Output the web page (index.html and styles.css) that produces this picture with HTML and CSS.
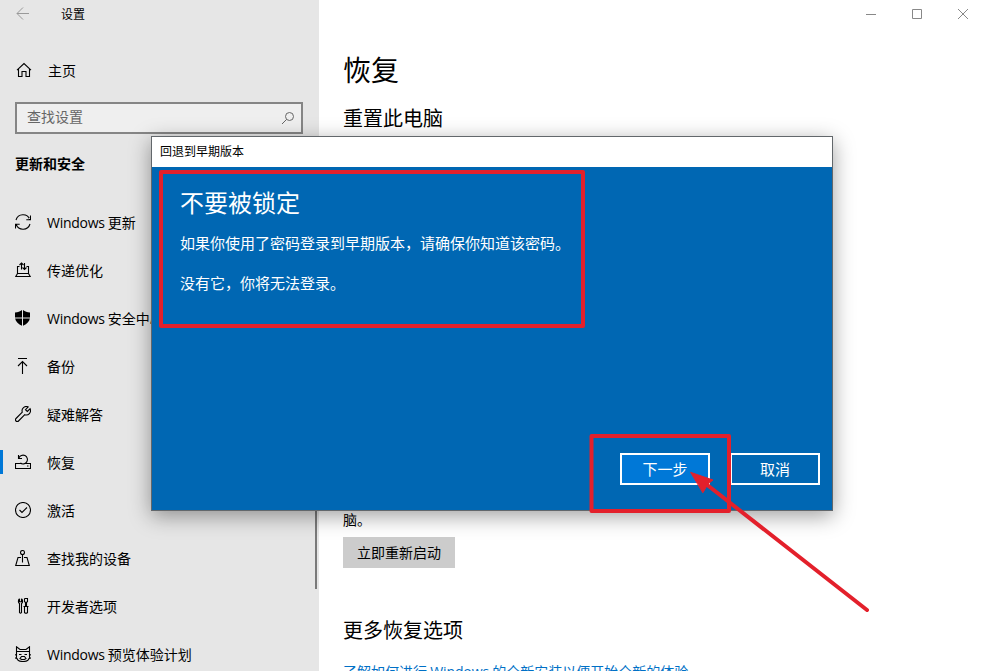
FILE: index.html
```
<!DOCTYPE html>
<html lang="zh-CN">
<head>
    <meta charset="UTF-8">
    <meta name="viewport" content="width=device-width, initial-scale=1.0">
    <title>设置</title>
    <link rel="stylesheet" href="styles.css">
</head>
<body>
    <div class="window">
        <div class="sidebar">
            <div class="title-bar">
                <svg class="back" width="14" height="14" viewBox="0 0 14 14"><path d="M13 7.500H1M7 1.500l-6 6 6 6"/></svg>
                <span>设置</span>
            </div>
            <div class="home">
                <svg class="icon" width="16" height="16" viewBox="0 0 16 16"><path d="M1 8.200L8 1.500l7 6.700M2.500 7v7.500h3.500V9.500h4v5h3.500V7"/></svg>
                <span>主页</span>
            </div>
            <div class="search-box">
                <span>查找设置</span>
                <svg width="14" height="14" viewBox="0 0 14 14"><circle cx="8.500" cy="5.500" r="4"/><path d="M5.600 8.400L1 13"/></svg>
            </div>
            <div class="category">更新和安全</div>
            <div class="nav">
                <div class="nav-item">
                    <svg class="icon" width="16" height="16" viewBox="0 0 16 16"><path d="M1 6A7.300 7.300 0 0 1 14.800 5.500M15.500 1.500v4.200h-4.200M15 10A7.300 7.300 0 0 1 1.200 10.500M.5 14.500v-4.200h4.200"/></svg>
                    <span><span class="latin">Windows</span> 更新</span>
                </div>
                <div class="nav-item">
                    <svg class="icon" width="16" height="16" viewBox="0 0 16 16"><path d="M4.500 4.500h-2v7h11v-7h-2M2.500 11.500L.8 14.500h14.400l-1.700-3M6.500 7.500V1M4.500 3l2-2 2 2M9.500 1v6.500M7.500 5.500l2 2 2-2"/></svg>
                    <span>传递优化</span>
                </div>
                <div class="nav-item">
                    <svg class="icon shield" width="16" height="16" viewBox="0 0 16 16"><path d="M7 0v7.500H0V2.500C3 2.500 5 1.500 7 0zM8 0v7.500h7V2.500C12 2.500 10 1.500 8 0zM.1 8.500H7v7.300C3.500 14 .7 12 .1 8.500zM8 8.500h6.900c-.6 3.500-3.400 5.500-6.900 7.300z"/></svg>
                    <span><span class="latin">Windows</span> 安全中心</span>
                </div>
                <div class="nav-item">
                    <svg class="icon" width="16" height="16" viewBox="0 0 16 16"><path d="M3 .5h9M7.500 16V3.500M3 8l4.500-4.500L12 8"/></svg>
                    <span>备份</span>
                </div>
                <div class="nav-item">
                    <svg class="icon" width="16" height="16" viewBox="0 0 16 16"><path d="M13.200.9A4.300 4.300 0 0 0 7.300 6.200L1 12.500a1.600 1.600 0 0 0 2.500 2.500L9.800 8.700A4.300 4.300 0 0 0 15.100 2.800L12.300 5.500 10.500 3.700z"/></svg>
                    <span>疑难解答</span>
                </div>
                <div class="nav-item active">
                    <svg class="icon" width="16" height="16" viewBox="0 0 16 16"><path d="M5.500 9.500h-5v5h15v-5h-5M3.500 1v3.500H7M3.900 4A4.400 4.400 0 1 1 5.300 9M12 12h1.500"/></svg>
                    <span>恢复</span>
                </div>
                <div class="nav-item">
                    <svg class="icon" width="16" height="16" viewBox="0 0 16 16"><circle cx="8" cy="8" r="7.500"/><path d="M4.500 8l2.500 2.500L12 5.500"/></svg>
                    <span>激活</span>
                </div>
                <div class="nav-item">
                    <svg class="icon" width="16" height="16" viewBox="0 0 16 16"><circle cx="7.500" cy="2.500" r="2"/><path d="M7.500 4.500v8M6 7.500H3L.7 15.500h13.600L12 7.500H9"/></svg>
                    <span>查找我的设备</span>
                </div>
                <div class="nav-item">
                    <svg class="icon" width="16" height="16" viewBox="0 0 16 16"><path d="M4.500.8v3h2v-3M4.500.8C3 1.800 3 4.500 4.500 5.500v9q1 1.300 2 0v-9C8 4.500 8 1.800 6.500.8M9.500.5h3V3.500l-1 1v4M9.500.5V3.500l1 1v4M8.500 8.500h5M9.500 8.500v6q1.500 1.500 3 0v-6"/></svg>
                    <span>开发者选项</span>
                </div>
                <div class="nav-item">
                    <svg class="icon" width="16" height="16" viewBox="0 0 16 16"><path d="M1.500 9.500V.8L5 3.500h6L14.500.8v8.700M1.500 5.500h13M.3 8.500l1.200 1v2l-1 .5 1.500.5c1 4 11 4 12 0l1.500-.5-1-.5v-2l1.200-1M4 8.500h2.500M9.500 8.500H12M5 12.500l1.500-2h3l1.500 2-1.500 1h-3z"/></svg>
                    <span><span class="latin">Windows</span> 预览体验计划</span>
                </div>
            </div>
            <div class="scrollbar"></div>
        </div>
        <div class="content">
            <div class="window-buttons">
                <svg width="10" height="10" viewBox="0 0 10 10"><path d="M0 5.500h10"/></svg>
                <svg width="10" height="10" viewBox="0 0 10 10"><path d="M.5.5h9v9h-9z"/></svg>
                <svg width="10" height="10" viewBox="0 0 10 10"><path d="M0 0l10 10M10 0L0 10"/></svg>
            </div>
            <h1>恢复</h1>
            <h2>重置此电脑</h2>
            <div class="startup">
                <p>脑。</p>
                <button type="button" class="restart-button">立即重新启动</button>
            </div>
            <h2>更多恢复选项</h2>
            <a class="link" href="#">了解如何进行 <span class="latin">Windows</span> 的全新安装以便开始全新的体验</a>
        </div>
    </div>

    <div class="dialog">
        <div class="dialog-title">回退到早期版本</div>
        <div class="dialog-body">
            <div class="message">
                <h3>不要被锁定</h3>
                <p>如果你使用了密码登录到早期版本，请确保你知道该密码。</p>
                <p>没有它，你将无法登录。</p>
            </div>
            <div class="dialog-buttons">
                <button type="button" class="dialog-button primary">下一步</button>
                <button type="button" class="dialog-button">取消</button>
            </div>
        </div>
    </div>

    <!-- red marks drawn over the dialog -->
    <svg class="marks" width="983" height="671" viewBox="0 0 983 671">
        <rect x="161" y="172" width="422" height="154"/>
        <rect x="591.500" y="436" width="137.500" height="75"/>
        <path d="M706 484L867 610"/>
        <polygon points="691,472.500 713,480 708,484 703,492.500"/>
    </svg>
</body>
</html>
```
FILE: styles.css
```
body {
    font-family: "Noto Sans CJK SC", sans-serif;
    font-size: 14px;
    margin: 0;
    color: #000;
    height: 671px;
    overflow: hidden;
    position: relative;
}
h1, h2, h3, p {
    margin: 0;
    font-weight: normal;
}
svg {
    fill: none;
    stroke: #000;
    stroke-width: 1;
    flex-shrink: 0;
}
.icon {
    stroke-width: 1.1;
}
.latin {
    font-family: "Open Sans", sans-serif;
    letter-spacing: -0.28px;
}
.window {
    display: flex;
    height: 671px;
}
.sidebar {
    width: 319px;
    flex-shrink: 0;
    background-color: #e6e6e6;
    position: relative;
}
.title-bar {
    display: flex;
    align-items: center;
    gap: 31px;
    height: 26px;
    padding-left: 16px;
    font-size: 12px;
}
.back {
    stroke: #999;
}
.home {
    display: flex;
    align-items: center;
    gap: 16px;
    height: 48px;
    margin-top: 20px;
    padding-left: 16px;
}
.search-box {
    display: flex;
    align-items: center;
    justify-content: space-between;
    box-sizing: border-box;
    width: 288px;
    height: 32px;
    margin: 8px 0 0 15px;
    padding: 0 6px 4px 10px;
    border: 2px solid #858585;
    background-color: #efefef;
    color: #666;
}
.search-box svg {
    stroke: #666;
    margin-top: 3px;
}
.category {
    height: 24px;
    line-height: 24px;
    margin-top: 17px;
    padding-left: 15px;
    font-weight: bold;
}
.nav {
    margin-top: 23px;
}
.nav-item {
    display: flex;
    align-items: center;
    gap: 16px;
    height: 48px;
    padding-left: 15px;
    white-space: nowrap;
}
.shield {
    fill: #000;
    stroke: none;
}
.active {
    padding-left: 12px;
    background: linear-gradient(#0078d7, #0078d7) no-repeat 0 12px / 3px 24px;
    border-left: 3px solid transparent;
    background-origin: border-box;
}
.scrollbar {
    position: absolute;
    right: 2px;
    top: 160px;
    width: 2px;
    height: 429px;
    background-color: #7a7a7a;
}
.content {
    flex: 1;
    padding-left: 24px;
    background-color: #fff;
}
.window-buttons {
    display: flex;
    justify-content: flex-end;
    gap: 36px;
    height: 10px;
    padding: 9px 15px 0 0;
}
.window-buttons svg {
    stroke: #888;
}
h1 {
    margin-top: 30px;
    font-size: 28px;
    line-height: 40px;
}
h2 {
    margin-top: 15px;
    font-size: 20px;
    line-height: 28px;
}
.startup {
    margin-top: 377px;
}
.startup p {
    line-height: 20px;
}
.restart-button {
    display: block;
    width: 112px;
    height: 31px;
    margin: 8px 0 48px;
    padding: 0 0 2px;
    border: none;
    background-color: #ccc;
    color: #000;
    font: inherit;
}
.link {
    display: block;
    margin-top: 17px;
    line-height: 20px;
    color: #0070c6;
    text-decoration: none;
}
.link .latin {
    letter-spacing: -0.1px;
}
.dialog {
    position: absolute;
    left: 151px;
    top: 136px;
    box-sizing: border-box;
    width: 682px;
    height: 375px;
    display: flex;
    flex-direction: column;
    border: 1px solid #62676b;
    box-shadow: 0 5px 20px rgba(0, 0, 0, 0.38);
}
.dialog-title {
    height: 30px;
    line-height: 28px;
    padding-left: 8px;
    background-color: #fff;
    font-size: 12px;
}
.dialog-body {
    flex: 1;
    display: flex;
    flex-direction: column;
    justify-content: space-between;
    padding: 17px 12px 25px 28px;
    background-color: #0067b3;
    color: #fff;
    font-size: 15px;
}
.message h3 {
    font-size: 24px;
    line-height: 36px;
    margin-bottom: 13px;
}
.message p {
    line-height: 20px;
    margin-bottom: 20px;
}
.dialog-buttons {
    display: flex;
    justify-content: flex-end;
    gap: 20px;
}
.dialog-button {
    width: 90px;
    height: 32px;
    padding: 0 0 2px;
    border: 2px solid #fff;
    background-color: transparent;
    color: #fff;
    font: inherit;
}
.primary {
    background-color: #0078d7;
}
.marks {
    position: absolute;
    left: 0;
    top: 0;
    stroke: #e3202b;
    stroke-width: 4;
    stroke-linejoin: round;
    stroke-linecap: round;
}
.marks polygon {
    fill: #e3202b;
    stroke-width: 1;
}
```
